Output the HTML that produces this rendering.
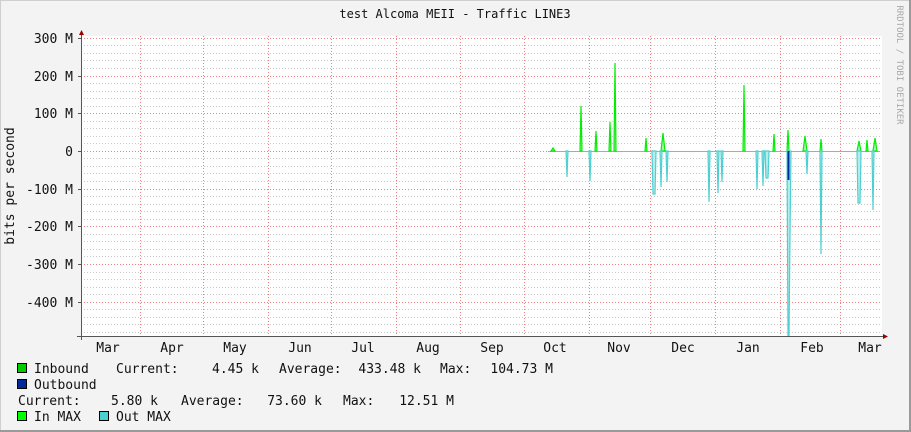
<!DOCTYPE html>
<html><head><meta charset="utf-8"><style>
html,body{margin:0;padding:0;background:#f3f3f3;}
svg{display:block;}
text{font-family:"DejaVu Sans Mono","Liberation Mono",monospace;font-size:12px;fill:#111;}
.l{font-size:13px;}
</style></head><body>
<svg width="911" height="432" viewBox="0 0 911 432" xmlns="http://www.w3.org/2000/svg">
<rect x="0" y="0" width="911" height="432" fill="#f3f3f3"/>
<rect x="0.5" y="0.5" width="910" height="431" fill="none" stroke="#cfcfcf"/>
<line x1="0" y1="431" x2="911" y2="431" stroke="#9a9a9a" stroke-width="2"/>
<line x1="910" y1="0" x2="910" y2="432" stroke="#9a9a9a" stroke-width="2"/>
<rect x="81" y="36" width="801" height="300" fill="#fff"/>
<g stroke="#c8c8c8" stroke-dasharray="1,2" stroke-width="1">
<line x1="81" x2="882" y1="45.5" y2="45.5"/><line x1="81" x2="882" y1="53.5" y2="53.5"/><line x1="81" x2="882" y1="60.5" y2="60.5"/><line x1="81" x2="882" y1="68.5" y2="68.5"/>
<line x1="81" x2="882" y1="83.5" y2="83.5"/><line x1="81" x2="882" y1="91.5" y2="91.5"/><line x1="81" x2="882" y1="98.5" y2="98.5"/><line x1="81" x2="882" y1="106.5" y2="106.5"/>
<line x1="81" x2="882" y1="121.5" y2="121.5"/><line x1="81" x2="882" y1="128.5" y2="128.5"/><line x1="81" x2="882" y1="136.5" y2="136.5"/><line x1="81" x2="882" y1="143.5" y2="143.5"/>
<line x1="81" x2="882" y1="158.5" y2="158.5"/><line x1="81" x2="882" y1="166.5" y2="166.5"/><line x1="81" x2="882" y1="173.5" y2="173.5"/><line x1="81" x2="882" y1="181.5" y2="181.5"/>
<line x1="81" x2="882" y1="196.5" y2="196.5"/><line x1="81" x2="882" y1="204.5" y2="204.5"/><line x1="81" x2="882" y1="211.5" y2="211.5"/><line x1="81" x2="882" y1="219.5" y2="219.5"/>
<line x1="81" x2="882" y1="234.5" y2="234.5"/><line x1="81" x2="882" y1="241.5" y2="241.5"/><line x1="81" x2="882" y1="249.5" y2="249.5"/><line x1="81" x2="882" y1="256.5" y2="256.5"/>
<line x1="81" x2="882" y1="272.5" y2="272.5"/><line x1="81" x2="882" y1="279.5" y2="279.5"/><line x1="81" x2="882" y1="287.5" y2="287.5"/><line x1="81" x2="882" y1="294.5" y2="294.5"/>
<line x1="81" x2="882" y1="309.5" y2="309.5"/><line x1="81" x2="882" y1="317.5" y2="317.5"/><line x1="81" x2="882" y1="324.5" y2="324.5"/><line x1="81" x2="882" y1="332.5" y2="332.5"/>
</g>
<g stroke="#f08080" stroke-dasharray="1,2" stroke-width="1">
<line x1="81" x2="882" y1="38.5" y2="38.5"/><line x1="81" x2="882" y1="76.5" y2="76.5"/><line x1="81" x2="882" y1="113.5" y2="113.5"/><line x1="81" x2="882" y1="151.5" y2="151.5"/><line x1="81" x2="882" y1="189.5" y2="189.5"/><line x1="81" x2="882" y1="226.5" y2="226.5"/><line x1="81" x2="882" y1="264.5" y2="264.5"/><line x1="81" x2="882" y1="302.5" y2="302.5"/>
<line x1="140.5" x2="140.5" y1="36" y2="336"/><line x1="203.5" x2="203.5" y1="36" y2="336"/><line x1="268.5" x2="268.5" y1="36" y2="336"/><line x1="331.5" x2="331.5" y1="36" y2="336"/><line x1="396.5" x2="396.5" y1="36" y2="336"/><line x1="460.5" x2="460.5" y1="36" y2="336"/><line x1="524.5" x2="524.5" y1="36" y2="336"/><line x1="589.5" x2="589.5" y1="36" y2="336"/><line x1="650.5" x2="650.5" y1="36" y2="336"/><line x1="715.5" x2="715.5" y1="36" y2="336"/><line x1="780.5" x2="780.5" y1="36" y2="336"/><line x1="840.5" x2="840.5" y1="36" y2="336"/>
</g>
<line x1="548" x2="880" y1="151.5" y2="151.5" stroke="#4ed0d0"/>
<g fill="#b0f0b0" stroke="#00ee00" stroke-width="1.2">
<polygon points="551,151 553,148 555,151"/>
<polygon points="580,151 581,106 582,151"/>
<polygon points="595,151 596,131 597,151"/>
<polygon points="609,151 610,122 611,151"/>
<polygon points="614,151 615,63 616,151"/>
<polygon points="645,151 646,138 647,151"/>
<polygon points="661,151 663,133 665,151"/>
<polygon points="743,151 744,85 745,151"/>
<polygon points="773,151 774,134 775,151"/>
<polygon points="787,151 788,130 789,151"/>
<polygon points="803,151 805,136 807,151"/>
<polygon points="820,151 821,139 822,151"/>
<polygon points="857,151 859,141 861,151"/>
<polygon points="866,151 867,140 868,151"/>
<polygon points="873,151 875,138 877,151"/>
</g>
<g fill="#b8ecec" stroke="#4ed0d0" stroke-width="1.2">
<polygon points="566,151 567,177 568,151"/>
<polygon points="589,151 590,181 591,151"/>
<polygon points="652,151 653,194 655,194 656,151"/>
<polygon points="660,151 661,187 662,151"/>
<polygon points="666,151 667,182 668,151"/>
<polygon points="708,151 709,202 710,151"/>
<polygon points="717,151 718,193 719,151"/>
<polygon points="721,151 722,182 723,151"/>
<polygon points="756,151 757,189 758,151"/>
<polygon points="762,151 763,186 764,151"/>
<polygon points="765,151 766,178 768,178 769,151"/>
<polygon points="787,151 788,336 789,336 790,235 791,151"/>
<polygon points="806,151 807,174 808,151"/>
<polygon points="820,151 821,254 822,151"/>
<polygon points="857,151 858,203 860,203 861,151"/>
<polygon points="872,151 873,210 874,151"/>
</g>
<line x1="788.5" x2="788.5" y1="151" y2="180" stroke="#002a97" stroke-width="2"/>
<line x1="81.5" x2="81.5" y1="34" y2="340" stroke="#555"/>
<line x1="77" x2="884" y1="336.5" y2="336.5" stroke="#555"/>
<polygon points="79,35 84,35 81.5,30" fill="#900"/>
<polygon points="883,334 883,339 888,336.5" fill="#900"/>
<g stroke="#555">
<line x1="78" x2="81" y1="38.5" y2="38.5"/><line x1="78" x2="81" y1="76.5" y2="76.5"/><line x1="78" x2="81" y1="113.5" y2="113.5"/><line x1="78" x2="81" y1="151.5" y2="151.5"/><line x1="78" x2="81" y1="189.5" y2="189.5"/><line x1="78" x2="81" y1="226.5" y2="226.5"/><line x1="78" x2="81" y1="264.5" y2="264.5"/><line x1="78" x2="81" y1="302.5" y2="302.5"/>
</g>
<text x="455" y="18" text-anchor="middle">test Alcoma MEII - Traffic LINE3</text>
<g text-anchor="end" class="l">
<text x="73" y="43" class="l">300 M</text><text x="73" y="81" class="l">200 M</text><text x="73" y="118" class="l">100 M</text><text x="73" y="156" class="l">0</text><text x="73" y="194" class="l">-100 M</text><text x="73" y="231" class="l">-200 M</text><text x="73" y="269" class="l">-300 M</text><text x="73" y="307" class="l">-400 M</text>
</g>
<text transform="translate(14,186) rotate(-90)" text-anchor="middle" class="l">bits per second</text>
<text transform="translate(897,65) rotate(90)" text-anchor="middle" style="font-size:9px;fill:#a8a8a8">RRDTOOL / TOBI OETIKER</text>
<g text-anchor="middle">
<text x="108" y="352" class="l">Mar</text><text x="172" y="352" class="l">Apr</text><text x="235" y="352" class="l">May</text><text x="300" y="352" class="l">Jun</text><text x="363" y="352" class="l">Jul</text><text x="428" y="352" class="l">Aug</text><text x="492" y="352" class="l">Sep</text><text x="555" y="352" class="l">Oct</text><text x="619" y="352" class="l">Nov</text><text x="683" y="352" class="l">Dec</text><text x="748" y="352" class="l">Jan</text><text x="812" y="352" class="l">Feb</text><text x="870" y="352" class="l">Mar</text>
</g>
<rect x="17.5" y="363.5" width="9" height="9" fill="#00cc00" stroke="#000"/>
<text x="34" y="373" class="l">Inbound</text>
<text x="116" y="373" class="l">Current:</text>
<text x="259" y="373" text-anchor="end" class="l">4.45 k</text>
<text x="279" y="373" class="l">Average:</text>
<text x="421" y="373" text-anchor="end" class="l">433.48 k</text>
<text x="440" y="373" class="l">Max:</text>
<text x="553" y="373" text-anchor="end" class="l">104.73 M</text>
<rect x="17.5" y="379.5" width="9" height="9" fill="#002a97" stroke="#000"/>
<text x="34" y="389" class="l">Outbound</text>
<text x="18" y="405" class="l">Current:</text>
<text x="158" y="405" text-anchor="end" class="l">5.80 k</text>
<text x="181" y="405" class="l">Average:</text>
<text x="322" y="405" text-anchor="end" class="l">73.60 k</text>
<text x="343" y="405" class="l">Max:</text>
<text x="454" y="405" text-anchor="end" class="l">12.51 M</text>
<rect x="17.5" y="411.5" width="9" height="9" fill="#00ff00" stroke="#000"/>
<text x="34" y="421" class="l">In MAX</text>
<rect x="99.5" y="411.5" width="9" height="9" fill="#4ed0d0" stroke="#000"/>
<text x="116" y="421" class="l">Out MAX</text>
</svg>
</body></html>
